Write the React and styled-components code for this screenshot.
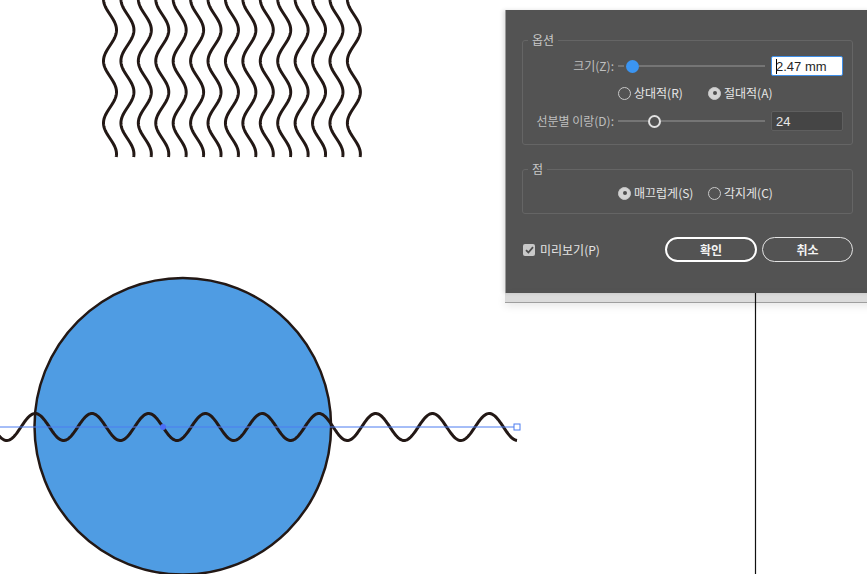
import React from 'react';
import styled, { createGlobalStyle } from 'styled-components';

const Global = createGlobalStyle`
  html, body { margin: 0; padding: 0; background: #fff; }
  body { font-family: "Noto Sans CJK KR", "Noto Sans", sans-serif; }
  * { box-sizing: border-box; }
`;

const Stage = styled.div`
  position: relative;
  width: 867px;
  height: 574px;
  overflow: hidden;
  background: #fff;
`;

const Artwork = styled.svg`
  position: absolute;
  left: 0;
  top: 0;
  display: block;
`;

const Dialog = styled.div`
  position: absolute;
  left: 505px;
  top: 10px;
  width: 380px;
  height: 283px;
  background: #535353;
  border-left: 1px solid #9a9a9a;
  box-shadow: -2px 0 4px rgba(0, 0, 0, 0.12);
  padding: 22px 0 0 16px;
  display: flex;
  flex-direction: column;
  color: #c4c4c4;
  font-size: 12px;
  &::after {
    content: '';
    position: absolute;
    left: -1px;
    right: 0;
    top: 100%;
    height: 9px;
    background: rgba(0, 0, 0, 0.14);
    border-bottom: 1px solid rgba(0, 0, 0, 0.28);
    box-shadow: 0 3px 8px rgba(0, 0, 0, 0.1);
  }
`;

const Group = styled.fieldset`
  width: 331px;
  margin: ${p => p.$mt || 0}px 0 0 0;
  padding: ${p => p.$pt}px 8px ${p => p.$pb}px 0;
  border: 1px solid #656565;
  border-radius: 3px;
  min-width: 0;
  display: flex;
  flex-direction: column;
`;

const Legend = styled.legend`
  margin-left: 5px;
  padding: 0 4px;
  line-height: 16px;
  font-size: 12px;
  color: #c8c8c8;
`;

const Row = styled.div`
  display: flex;
  align-items: center;
  height: ${p => p.$h}px;
  margin-top: ${p => p.$mt || 0}px;
  padding-left: ${p => p.$indent || 0}px;
`;

const Label = styled.span`
  width: 91px;
  text-align: right;
  white-space: nowrap;
  color: #bfbfbf;
  line-height: 16px;
`;

const Slider = styled.div`
  width: 147px;
  margin-left: 4px;
  display: flex;
  align-items: center;
  height: 14px;
`;

const Track = styled.span`
  height: 2px;
  background: #757575;
  width: ${p => (p.$w ? `${p.$w}px` : 'auto')};
  flex: ${p => (p.$w ? '0 0 auto' : '1')};
  margin-right: ${p => p.$gap || 0}px;
`;

const Thumb = styled.span`
  width: 13px;
  height: 13px;
  border-radius: 50%;
  flex: 0 0 auto;
  background: ${p => (p.$blue ? '#3b95f2' : '#535353')};
  border: ${p => (p.$blue ? 'none' : '2.5px solid #e2e2e2')};
`;

const Field = styled.div`
  width: 72px;
  height: 20px;
  margin-left: 6px;
  border: ${p => (p.$focus ? '1.5px solid #3f8fe8' : '1px solid #5f5f5f')};
  border-radius: 2px;
  background: ${p => (p.$focus ? '#ffffff' : '#454545')};
  color: ${p => (p.$focus ? '#262626' : '#e8e8e8')};
  font-family: "Liberation Sans", Arial, sans-serif;
  font-size: 13px;
  display: flex;
  align-items: center;
  padding-left: 4px;
  white-space: nowrap;
`;

const Caret = styled.span`
  width: 1px;
  height: 15px;
  background: #000;
  margin-right: -1px;
`;

const Radios = styled.div`
  display: grid;
  grid-template-columns: 90px auto;
  align-items: center;
`;

const Radio = styled.span`
  display: flex;
  align-items: center;
  gap: 3px;
  color: #e6e6e6;
  white-space: nowrap;
  line-height: 16px;
`;

const RadioDot = styled.span`
  width: 13px;
  height: 13px;
  border-radius: 50%;
  border: 1.5px solid #c9c9c9;
  background: ${p => (p.$on ? '#d4d4d4' : 'transparent')};
  display: flex;
  align-items: center;
  justify-content: center;
  &::after {
    content: '';
    display: ${p => (p.$on ? 'block' : 'none')};
    width: 4px;
    height: 4px;
    border-radius: 50%;
    background: #4e4e4e;
  }
`;

const Footer = styled.div`
  width: 331px;
  margin-top: 23px;
  height: 25px;
  display: flex;
  align-items: center;
`;

const Check = styled.span`
  display: flex;
  align-items: center;
  gap: 5px;
  color: #e4e4e4;
  margin-right: auto;
  margin-left: 1px;
  white-space: nowrap;
`;

const Box = styled.span`
  width: 12px;
  height: 12px;
  border-radius: 2px;
  background: #c9c9c9;
  display: flex;
  align-items: center;
  justify-content: center;
`;

const Button = styled.button`
  width: ${p => p.$w}px;
  height: 25px;
  margin-left: ${p => p.$ml || 0}px;
  border-radius: 13px;
  border: ${p => (p.$primary ? '2px solid #ffffff' : '1.5px solid #e4e4e4')};
  background: transparent;
  color: #f4f4f4;
  font-family: "Noto Sans CJK KR", sans-serif;
  font-size: 12px;
  font-weight: 700;
  padding: 0;
  display: flex;
  align-items: center;
  justify-content: center;
`;

function verticalWave(xc) {
  const pts = [];
  for (let y = -4; y <= 157; y += 1) {
    const x = xc + 6.5 * Math.cos((2 * Math.PI * (y - 30)) / 62);
    pts.push(`${x.toFixed(2)},${y}`);
  }
  return 'M' + pts.join(' L');
}

function horizontalWave() {
  const pts = [];
  for (let x = -3; x <= 517; x += 1) {
    const y = 427 - 13.5 * Math.cos((2 * Math.PI * (x - 35.2)) / 56.75);
    pts.push(`${x},${y.toFixed(2)}`);
  }
  return 'M' + pts.join(' L');
}

const waves = Array.from({ length: 15 }, (_, i) => 110 + 17.42 * i);

function Canvas() {
  return (
    <Artwork width="867" height="574" viewBox="0 0 867 574">
      {waves.map((xc, i) => (
        <path key={i} d={verticalWave(xc)} fill="none" stroke="#231815" strokeWidth="3" />
      ))}
      <circle cx="182.8" cy="426.2" r="148.3" fill="#4f9ce3" stroke="#231815" strokeWidth="2.5" />
      <path d={horizontalWave()} fill="none" stroke="#231815" strokeWidth="3" />
      <line x1="0" y1="427" x2="514" y2="427" stroke="#4d7cf0" strokeWidth="1" />
      <circle cx="163" cy="427" r="3" fill="#4b6ff6" />
      <rect x="514" y="424" width="6" height="6" fill="#fff" stroke="#4d7cf0" strokeWidth="1" />
      <line x1="755.5" y1="290" x2="755.5" y2="574" stroke="#111" strokeWidth="1.2" />
    </Artwork>
  );
}

export default function App() {
  return (
    <>
      <Global />
      <Stage>
        <Canvas />
        <Dialog>
          <Group $pt={8} $pb={13}>
            <Legend>옵션</Legend>
            <Row $h={20}>
              <Label>크기(Z):</Label>
              <Slider>
                <Track $w={6} $gap={2} />
                <Thumb $blue />
                <Track />
              </Slider>
              <Field $focus>
                <Caret />
                2.47 mm
              </Field>
            </Row>
            <Row $h={16} $mt={9} $indent={95}>
              <Radios>
                <Radio><RadioDot />상대적(R)</Radio>
                <Radio><RadioDot $on />절대적(A)</Radio>
              </Radios>
            </Row>
            <Row $h={20} $mt={10}>
              <Label>선분별 이랑(D):</Label>
              <Slider>
                <Track $w={30} />
                <Thumb />
                <Track />
              </Slider>
              <Field>24</Field>
            </Row>
          </Group>
          <Group $mt={16} $pt={8} $pb={12}>
            <Legend>점</Legend>
            <Row $h={16} $indent={95}>
              <Radios>
                <Radio><RadioDot $on />매끄럽게(S)</Radio>
                <Radio><RadioDot />각지게(C)</Radio>
              </Radios>
            </Row>
          </Group>
          <Footer>
            <Check>
              <Box>
                <svg width="9" height="8" viewBox="0 0 9 8">
                  <path d="M1 4.2 L3.4 6.5 L8 1.2" fill="none" stroke="#4d4d4d" strokeWidth="1.8" />
                </svg>
              </Box>
              미리보기(P)
            </Check>
            <Button $w={92} $primary>확인</Button>
            <Button $w={91} $ml={5}>취소</Button>
          </Footer>
        </Dialog>
      </Stage>
    </>
  );
}
